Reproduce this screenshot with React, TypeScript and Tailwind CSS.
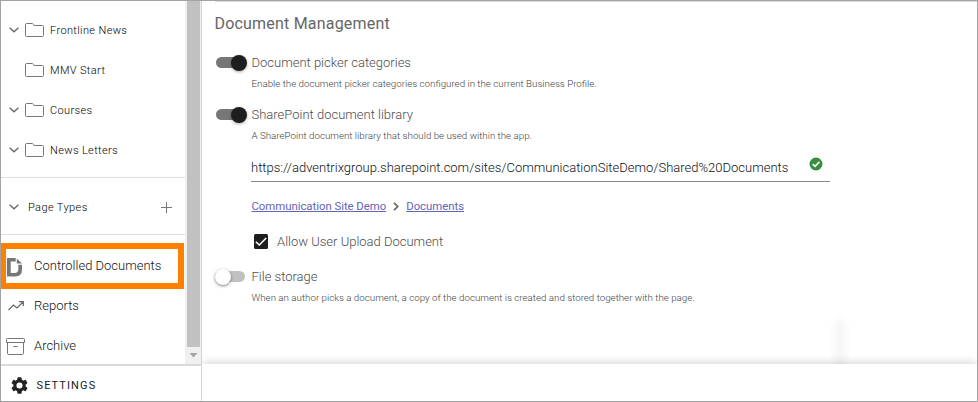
import React from "react";

function Chevron() {
  return (
    <svg width="10" height="6" viewBox="0 0 10 6" fill="none" stroke="#666" strokeWidth="1.3">
      <path d="M0.6 0.8 5 4.8 9.4 0.8" />
    </svg>
  );
}

function Folder() {
  return (
    <svg width="19" height="14" viewBox="0 0 19 14" fill="none" stroke="#777" strokeWidth="1">
      <path d="M.5 12.5V1.5Q.5.5 1.5.5H7.2Q7.9.5 8.3 1.2L9 2.5H17.5Q18.5 2.5 18.5 3.5V12.5Q18.5 13.5 17.5 13.5H1.5Q.5 13.5.5 12.5Z" />
    </svg>
  );
}

function FolderRow({ label, open = true }: { label: string; open?: boolean }) {
  return (
    <div className="flex h-10 items-center pl-2">
      <span className="w-4">{open && <Chevron />}</span>
      <Folder />
      <span className="ml-[6px] pt-[2px] text-[11px] font-light tracking-[0.37px] text-black">{label}</span>
    </div>
  );
}

function Toggle({ on }: { on: boolean }) {
  return on ? (
    <span className="flex h-[11px] w-[31px] items-center justify-end rounded-full bg-linear-to-r from-[#777] from-80% to-transparent to-80%">
      <span className="size-4 shrink-0 rounded-full bg-[#1e1e1e] shadow-[0_1px_3px_rgba(0,0,0,0.35)]" />
    </span>
  ) : (
    <span className="-ml-px flex h-[11px] w-[30px] items-center rounded-full bg-[#c1c1c1]">
      <span className="size-4 shrink-0 rounded-full bg-white shadow-[0_1px_3px_rgba(0,0,0,0.5)]" />
    </span>
  );
}

function Setting({ label, hint, on }: { label: string; hint: string; on: boolean }) {
  return (
    <div className="h-[52px]">
      <div className="flex h-[23px] items-center">
        <span className="flex w-[36.5px] items-center pl-px">
          <Toggle on={on} />
        </span>
        <span className="text-[13px] font-light text-[#4c4c4c]">{label}</span>
      </div>
      <p className="ml-[36.5px] h-[19px] text-[9.75px] leading-[19px] font-light text-[#444]">{hint}</p>
    </div>
  );
}

function Sidebar() {
  return (
    <aside className="flex w-[201px] shrink-0 flex-col border-r border-[#d5d5d5]">
      <div className="flex h-[363px]">
        <nav className="w-[184px]">
          <div className="h-[177px] border-b border-[#dedede] pt-[9px]">
            <FolderRow label="Frontline News" />
            <FolderRow label="MMV Start" open={false} />
            <FolderRow label="Courses" />
            <FolderRow label="News Letters" />
          </div>
          <div className="flex h-[57px] items-center border-b border-[#dedede] pt-[2px] pr-[13px] pl-2">
            <Chevron />
            <span className="ml-[9px] flex-1 pt-[2px] text-[11px] font-light tracking-[0.4px] text-black">Page Types</span>
            <svg width="11" height="11" viewBox="0 0 11 11" stroke="#777" strokeWidth="1">
              <path d="M5.5 0V11M0 5.5H11" />
            </svg>
          </div>
          <div className="mt-2 -ml-px flex h-[46px] w-[184px] items-center border-[6px] border-[#ff8000] text-[13px] font-light text-[#111]">
            <svg width="16" height="20" viewBox="0 0 16 20" className="relative top-px ml-px">
              <path fill="#777" d="M0 1H8.7V4.6H3.7V15.9H7.5Q11.3 15.9 11.3 12.2V7.8H15V12.5Q15 19.5 8 19.5H0Z" />
              <path fill="#777" d="M9.8 1.4 15 6.6H9.8Z" />
            </svg>
            <span className="ml-[11px]">Controlled Documents</span>
          </div>
          <div className="flex h-[33px] items-center pl-[7px] text-[13px] font-light text-[#111]">
            <svg width="16" height="10" viewBox="0 0 16 10" fill="none" stroke="#666" strokeWidth="1.2">
              <path d="M.5 9 5.5 4 9 7 15 1M11 .7H15.3V5" />
            </svg>
            <span className="ml-[10px]">Reports</span>
          </div>
          <div className="mt-[4px] flex h-10 items-center pl-[6px] text-[13px] font-light text-[#111]">
            <svg width="19" height="17" viewBox="0 0 19 17" fill="none" stroke="#777" className="relative -left-px">
              <path d="M.5 1.3Q.5.5 1.3.5H17.7Q18.5.5 18.5 1.3V4.5H.5ZM1.5 4.5V15.3Q1.5 16.5 2.7 16.5H16.3Q17.5 16.5 17.5 15.3V4.5M7.3 8.5H11.7" />
            </svg>
            <span className="ml-2">Archive</span>
          </div>
        </nav>
        <div className="flex w-4 flex-col bg-[#f0f0f0] pl-[2px]">
          <div className="h-[346px] w-[13px] bg-[#c1c1c1]" />
          <svg width="13" height="17" viewBox="0 0 13 17">
            <path fill="#a3a3a3" d="M2.5 6H10.5L6.5 10.5Z" />
          </svg>
        </div>
      </div>
      <div className="flex h-[37px] items-center border-t-2 border-[#dadada] pt-1 pl-[10px]">
        <svg width="17" height="17" viewBox="2 2 20 20">
          <path fill="#222" d="M19.14 12.94c.04-.3.06-.61.06-.94s-.02-.64-.07-.94l2.03-1.58a.49.49 0 0 0 .12-.61l-1.92-3.32a.49.49 0 0 0-.59-.22l-2.39.96a7 7 0 0 0-1.62-.94l-.36-2.54A.48.48 0 0 0 13.92 2.4h-3.84a.47.47 0 0 0-.47.41l-.36 2.54a7 7 0 0 0-1.62.94l-2.39-.96a.48.48 0 0 0-.59.22L2.74 8.87a.47.47 0 0 0 .12.61l2.03 1.58a6 6 0 0 0 0 1.88l-2.03 1.58a.49.49 0 0 0-.12.61l1.92 3.32c.12.22.37.29.59.22l2.39-.96c.5.38 1.03.7 1.62.94l.36 2.54c.05.24.24.41.48.41h3.84c.24 0 .44-.17.47-.41l.36-2.54a7 7 0 0 0 1.62-.94l2.39.96c.22.08.47 0 .59-.22l1.92-3.32a.47.47 0 0 0-.12-.61zM12 15.6a3.6 3.6 0 1 1 0-7.2 3.6 3.6 0 0 1 0 7.2z" />
        </svg>
        <span className="ml-[8.5px] pt-[2px] text-[11px] tracking-[1.1px] text-[#222]">SETTINGS</span>
      </div>
    </aside>
  );
}

export default function App() {
  return (
    <div className="flex h-[402px] w-[978px] overflow-hidden border border-[#a3a3a3] bg-white font-[Roboto,sans-serif] whitespace-nowrap">
      <Sidebar />
      <main className="flex flex-1 flex-col">
        <section className="relative h-[363px] overflow-hidden pl-[13px]">
          <h2 className="-indent-[0.5px] h-[50px] border-t border-[#dcdcdc] text-[16px] leading-[43px] tracking-[0.2px] text-[#666]">Document Management</h2>
          <Setting on label="Document picker categories" hint="Enable the document picker categories configured in the current Business Profile." />
          <Setting on label="SharePoint document library" hint="A SharePoint document library that should be used within the app." />
          <div className="ml-[36px] flex h-[27px] w-[579px] items-center border-b border-[#888] text-[13px] text-[#111]">
            <span className="flex-1 font-light">https://adventrixgroup.sharepoint.com/sites/CommunicationSiteDemo/Shared%20Documents</span>
            <svg width="14" height="14" viewBox="0 0 14 14" className="mr-[7px] mb-[9px] shrink-0">
              <circle cx="7" cy="7" r="6.5" fill="#388e3c" />
              <path d="M3.7 7.2 6 9.4 10.4 4.9" fill="none" stroke="white" strokeWidth="1.7" />
            </svg>
          </div>
          <div className="mt-[14px] ml-[36.5px] flex h-[21px] items-center text-[11.4px] text-[#6265b8]">
            <a className="tracking-[-0.04px] underline">Communication Site Demo</a>
            <svg width="6" height="9" viewBox="0 0 6 9" fill="none" stroke="#666" strokeWidth="1.7" className="mx-[7px]">
              <path d="M1 .8 4.7 4.5 1 8.2" />
            </svg>
            <a className="tracking-[-0.04px] underline">Documents</a>
          </div>
          <div className="mt-[14px] ml-[39px] flex h-5 items-center">
            <svg width="14" height="15" viewBox="0 0 14 15">
              <rect width="14" height="15" rx="1.5" fill="#1e1e1e" />
              <path d="M1.8 7.7 5.3 11 12.2 4" fill="none" stroke="white" strokeWidth="1.5" />
            </svg>
            <span className="ml-[9px] pt-px text-[13px] font-light text-[#4c4c4c]">Allow User Upload Document</span>
          </div>
          <div className="mt-[14px]">
            <Setting on={false} label="File storage" hint="When an author picks a document, a copy of the document is created and stored together with the page." />
          </div>
          <div className="absolute bottom-0 left-[627px] h-[52px] w-[22px] bg-linear-to-r from-transparent via-black/[0.035] to-transparent mask-t-from-70%" />
        </section>
        <footer className="relative flex-1 bg-white shadow-[0_-1px_9px_rgba(0,0,0,0.18)] [clip-path:inset(-20px_0_0_0)]" />
      </main>
    </div>
  );
}
